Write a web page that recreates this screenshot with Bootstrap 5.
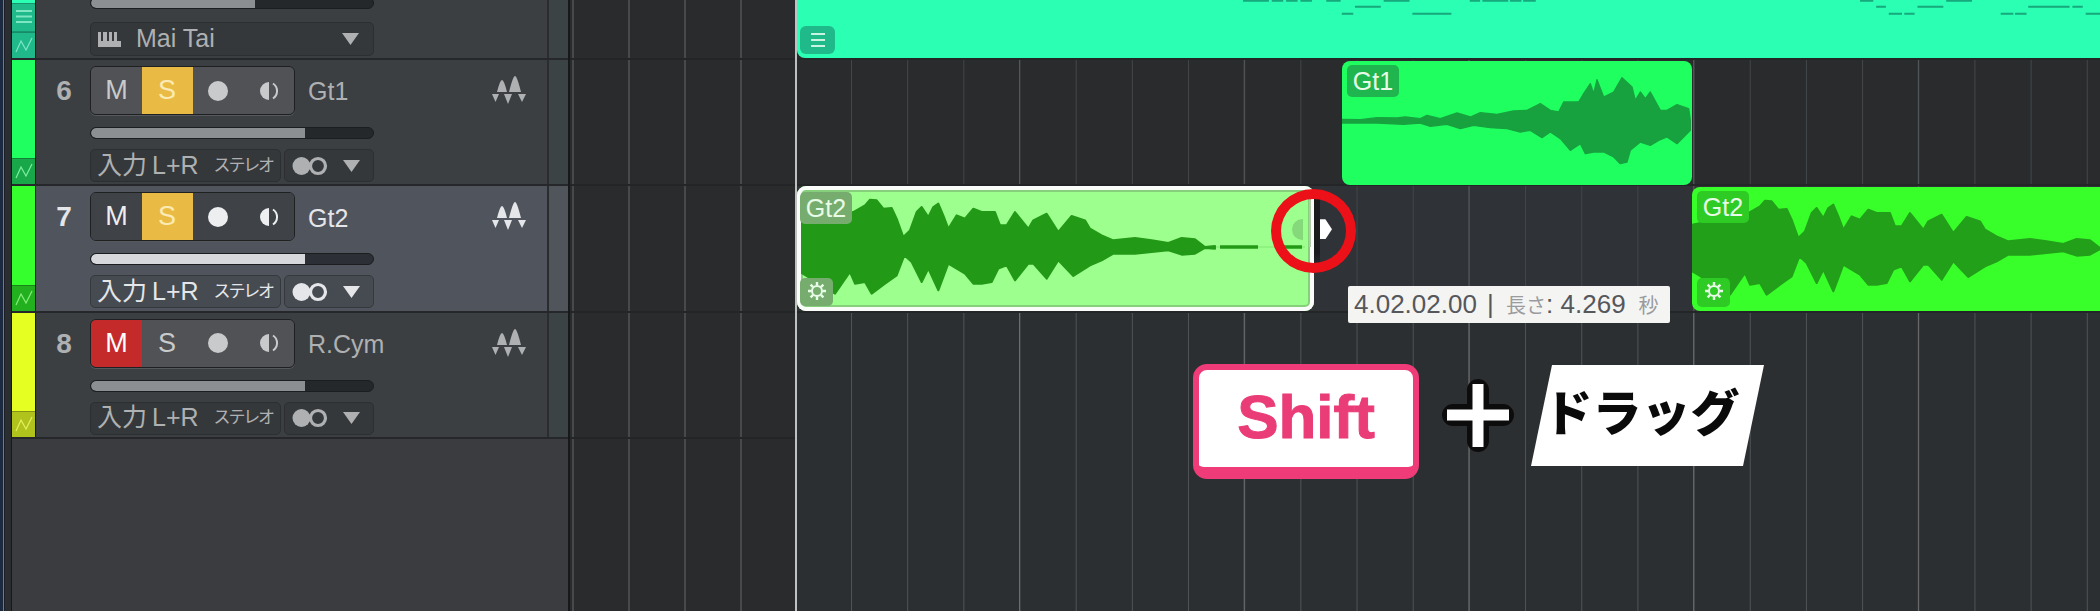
<!DOCTYPE html>
<html lang="ja">
<head>
  <meta charset="UTF-8">
  <title>Gt2 Shift + ドラッグ</title>
  <link href="https://cdn.jsdelivr.net/npm/bootstrap@5.3.0/dist/css/bootstrap.min.css" rel="stylesheet">
  <style>
    html, body { margin: 0; height: 611px; overflow: hidden; background: #2c2f31; }
    body { font-family: "Liberation Sans", "Noto Sans CJK JP", sans-serif; }
    .daw { position: relative; width: 2100px; height: 611px; overflow: hidden; }

    /* track panel */
    .edge-strip { width: 11px; background: linear-gradient(to right, #1b2a40 0 3px, #5d7fae 3px 4px, #1c2026 4px 5px, #2b2e31 5px); }
    .track-col { width: 559px; background: #3a3c3f; border-left: 1px solid #17181a; border-right: 2px solid #17181a; }
    .trk-row { height: 126.33px; background: #3c3f42; border-bottom: 2px solid #25272a; color: #aeb0b2; }
    .trk-row.first-row { height: 60px; }
    .trk-row.is-sel { background: #50545c; color: #e4e6e9; }
    .stripe { width: 24px; border-right: 1px solid #17181a; }
    .stripe-main { flex: 1; }
    .stripe-sub { height: 26px; border-top: 1px solid rgba(0,0,0,.25); }
    .stripe-sub svg, .stripe-mid svg { display: block; margin: 4px auto 0; }
    .stripe-mid { height: 29px; border-top: 1px solid rgba(0,0,0,.2); border-bottom: 1px solid rgba(0,0,0,.2); background: #1fb98a; }
    .c-teal .stripe-main { background: #2bffb3; } .c-teal .stripe-sub { background: #1fb98a; }
    .c-green .stripe-main { background: #1fff60; } .c-green .stripe-sub { background: #18a84a; }
    .c-lime .stripe-main { background: #35ff2d; } .c-lime .stripe-sub { background: #22b01f; }
    .c-yellow .stripe-main { background: #e6ff22; } .c-yellow .stripe-sub { background: #b0c21c; }
    .trk-num { width: 54px; font-size: 28px; font-weight: 700; line-height: 49px; text-align: center; padding: 6px 0 0 2px; }
    .trk-body { width: 285px; flex-shrink: 0; padding-top: 6px; }
    .first-row .trk-body { padding-top: 0; }
    .trk-top { height: 49px; }
    .trk-btns { width: 205px; height: 49px; flex-shrink: 0; border: 1px solid #1e2022; border-radius: 6px; overflow: hidden; box-shadow: 0 1px 0 #55585c; }
    .trk-btns .btn { flex: 1 1 0; height: 100%; padding: 0; border: 0; border-right: 1px solid #25272a; border-radius: 0; background: #505255; color: #c8cacc; font-size: 27px; line-height: 47px; display: flex; align-items: center; justify-content: center; }
    .trk-btns .btn:last-child { border-right: 0; }
    .is-sel .trk-btns .btn { background: #3f4247; color: #eceef0; border-right-color: #36383c; }
    .trk-btns .btn.on-solo { background: #e9bb45; color: #fbeab4; }
    .trk-btns .btn.on-mute { background: #c42a2a; color: #fff; }
    .rec-dot { width: 20px; height: 20px; border-radius: 50%; background: currentColor; }
    .trk-name { font-size: 25px; margin-left: 13px; padding-top: 3px; white-space: nowrap; }
    .trk-meter { margin-left: 117px; margin-top: 16px; flex-shrink: 0; }
    .trk-slider.progress { height: 12px; width: 284px; margin-top: 12px; background: #25282b; border: 1px solid #1b1d1f; border-radius: 6px; }
    .first-row .trk-slider.progress { margin-top: -3px; }
    .trk-slider .progress-bar { background: #8c8f92; border-radius: 6px 0 0 6px; }
    .is-sel .trk-slider .progress-bar { background: #d6d8dc; }
    .is-sel .trk-slider.progress { background: #2c3036; }
    .input-line { margin-top: 10px; width: 284px; height: 33px; gap: 3px; }
    .in-box { height: 33px; background: #35383b; border: 1px solid #2c2e31; border-radius: 5px; }
    .is-sel .in-box { background: #464a51; border-color: #35383d; }
    .in-name { width: 191px; font-size: 25px; padding-left: 6px; white-space: nowrap; }
    .in-name b { font-weight: 400; margin-left: 5px; }
    .in-kind { font-size: 17px; letter-spacing: -2.2px; margin-left: 15px; }
    .in-mode { flex: 1; padding-left: 7px; gap: 15px; }
    .inst-box { width: 284px; height: 34px; margin-top: 13px; font-size: 25px; padding: 0 14px 0 7px; }
    .inst-box span { margin-left: 15px; }
    .inst-box svg:last-child { margin-left: auto; }
    .trk-side { width: 21px; margin-left: 21px; background: #3b4344; border-left: 2px solid #2a2c2e; }
    .first-row .trk-side { margin-left: auto; }
    .is-sel .trk-side { background: #50555c; }
    .trk-filler { flex: 1; background: #3a3c3f; }

    /* timeline */
    .gutter { width: 225px; background-color: #2a2b2d;
      background-image: linear-gradient(to right, #47494b 2px, transparent 2px);
      background-size: 56px 100%; background-position: 58px 0; }
    .arrange { flex: 1; border-left: 2px solid #bfc0c2; background-color: #2c2f31; box-shadow: inset 2px 0 0 #141517; }
    .lane { position: relative; height: 126.33px; border-bottom: 2px solid #232527;
      background-image: linear-gradient(to right, #55585a 1px, transparent 1px), linear-gradient(to right, #434648 1px, transparent 1px);
      background-size: 224.72px 100%, 56.18px 100%;
      background-position: 222px 0, 54px 0; background-color: #292b2d; }
    .gutter .lane { background: none; }
    .lane.first-lane { height: 60px; }
    .lane.sel-lane { background-color: #2f3236; }
    .lane.last-lane { flex: 1; border-bottom: 0; background-color: #2c2f31;
      background-image: linear-gradient(to right, #6a6c6e 1px, transparent 1px), linear-gradient(to right, #505355 1px, transparent 1px); }

    /* clips */
    .clip { position: absolute; overflow: hidden; }
    .clip svg.wave { position: absolute; left: 0; top: 0; }
    .clip-tag { position: absolute; border-radius: 5px; color: #e8fbe6; font-size: 25px; line-height: 32px; text-align: center; }
    .tag-name { left: 5px; top: 4px; width: 52px; height: 32px; }
    .tag-gear { left: 5px; top: 91px; width: 33px; height: 29px; padding-top: 3px; line-height: 0; }
    .clip-top { left: 0; right: 0; top: 0; bottom: 0; background: #2bffb3; border-bottom-left-radius: 8px; }
    .clip-top .tag-menu { position: absolute; left: 3px; top: 26px; width: 35px; height: 28px; background: #1fb98a; border-radius: 6px; padding-top: 6px; text-align: center; line-height: 0; }
    .top-notes { position: absolute; left: 403px; top: 0; }
    .clip-gt1 { left: 545px; top: 1px; width: 350px; height: 124px; background: #1fff5f; border-radius: 8px; }
    .clip-gt1 .tag-name { background: #1fb650; }
    .clip-gt2-a { left: 0; top: 0; width: 517px; height: 125px; background: #9dff8e; border-radius: 9px; box-shadow: inset 0 0 0 4px #fafcfa, inset 0 0 0 6px #86cf7b; }
    .clip-gt2-a .tag-name { left: 3px; top: 6px; background: #76ad6f; }
    .clip-gt2-a .tag-gear { left: 3px; top: 92px; width: 33px; height: 28px; background: #76ad6f; }
    .clip-gt2-a svg.wave { clip-path: inset(4px 4px 4px 4px round 6px); }
    .clip-gt2-b { left: 895px; right: 0; top: 1px; height: 124px; background: #38ff2a; border-radius: 8px 0 0 8px; }
    .clip-gt2-b .tag-name, .clip-gt2-b .tag-gear { background: #2fcb25; }
    .fade-knob { position: absolute; left: 495px; top: 33px; width: 11px; height: 21px; background: #85d97a; border-radius: 11px 0 0 11px; }
    .trim-line { position: absolute; left: 512px; top: 13px; width: 2px; height: 48px; background: #b6c8b0; }
    .trim-edge { position: absolute; left: 517px; top: 10px; width: 6px; height: 76px; background: linear-gradient(#191a1c 75%, transparent); }
    .trim-arrow { position: absolute; left: 523px; top: 33px; width: 12px; height: 20px; background: #fff; clip-path: polygon(0 0, 45% 0, 100% 50%, 45% 100%, 0 100%); }

    /* annotations over the picture */
    .ring-mark { position: absolute; left: 1271px; top: 189px; width: 85px; height: 84px; border: 10px solid #ec1118; border-radius: 50%; }
    .len-tip { position: absolute; left: 1348px; top: 286px; width: 322px; height: 37px; background: #f4f4f3; border-radius: 2px; color: #55575b; font-size: 26px; line-height: 36px; padding-left: 6px; white-space: nowrap; }
    .len-tip i { font-style: normal; color: #9a9b9e; font-size: 20px; }
    .len-tip .t-sep { margin: 0 5px 0 3px; }
    .len-tip .t-unit { margin-left: 13px; }
    .key-shift { position: absolute; left: 1193px; top: 364px; width: 226px; height: 115px; background: #fff; border: solid #ef3b78; border-width: 6px 6px 12px; border-radius: 14px; color: #ea3c77; font-size: 62px; font-weight: 700; -webkit-text-stroke: 1px #ea3c77; padding-bottom: 4px; }
    .plus-mark { position: absolute; left: 1442px; top: 379px; }
    .drag-tag { position: absolute; left: 1531px; top: 365px; width: 233px; height: 101px; background: #fff; clip-path: polygon(21px 0, 100% 0, 212px 100%, 0 100%); color: #0a0a0a; font-size: 49px; font-weight: 900; padding: 0 12px 2px 0; white-space: nowrap; }
  </style>
</head>
<body>

<svg width="0" height="0" class="position-absolute">
  <defs>
    <symbol id="i-mon" viewBox="0 0 20 20"><path d="M10 1A9 9 0 0 0 10 19Z" fill="currentColor"/><path d="M14 2.500A9 9 0 0 1 14 17.500" fill="none" stroke="currentColor" stroke-width="2"/></symbol>
    <symbol id="i-meter" viewBox="0 0 34 28"><path fill="currentColor" d="M5 16Q8 4 10 4T15 16ZM17 16Q21 0 23 0T29 16ZM0 18H7L3.500 26ZM12 18H20L16 28ZM26 18H34L30 26Z"/></symbol>
    <symbol id="i-stereo" viewBox="0 0 36 20"><circle cx="9.500" cy="10" r="9" fill="currentColor"/><circle cx="26" cy="10" r="7.500" fill="none" stroke="currentColor" stroke-width="3.200"/></symbol>
    <symbol id="i-tri" viewBox="0 0 17 12"><path d="M0 0H17L8.500 12Z" fill="currentColor"/></symbol>
    <symbol id="i-zig" viewBox="0 0 18 16"><path d="M1 15L6 4L11 13L17 1" fill="none" stroke="currentColor" stroke-width="1.200"/></symbol>
    <symbol id="i-gear" viewBox="0 0 20 20"><g fill="none" stroke="currentColor"><circle cx="10" cy="10" r="5" stroke-width="2"/><path stroke-width="2.400" d="M10 1V4.500M10 15.500V19M1 10H4.500M15.500 10H19M3.600 3.600L6.100 6.100M13.900 13.900L16.400 16.400M3.600 16.400L6.100 13.900M13.900 6.100L16.400 3.600"/></g></symbol>
    <symbol id="wave-gt2" viewBox="36 562 1551 375">
      <path fill="currentColor" stroke="currentColor" stroke-width="6" stroke-linejoin="round" d="M36 675L205 640L240 620L255 603L275 605L295 630L320 628L335 660L355 715L375 695L395 640L410 625L430 655L445 625L460 615L475 650L490 690L515 650L540 660L565 630L590 640L610 640L630 640L645 680L665 680L690 640L710 665L730 690L745 665L785 645L820 700L860 652L900 665L915 690L950 710L985 725L1050 718L1100 725L1150 733L1190 718L1230 722L1260 745L1290 742L1290 750L1260 748L1230 765L1190 768L1150 755L1100 760L1050 765L985 765L950 785L915 800L865 832L820 785L785 840L745 795L730 795L690 845L665 800L640 810L620 850L590 855L565 855L540 825L515 810L490 795L460 875L430 810L410 850L380 790L358 770L335 830L300 855L260 885L240 850L210 855L195 820L150 885L45 820L36 815Z"/>
      <path d="M1305 745H1419M1488 745H1551" fill="none" stroke="currentColor" stroke-width="10"/>
      <path d="M1290 745H1560" fill="none" stroke="currentColor" stroke-width="2" opacity=".35"/>
    </symbol>
    <symbol id="wave-gt1" viewBox="35 32 1050 375">
      <path fill="currentColor" stroke="currentColor" stroke-width="4" stroke-linejoin="round" d="M35 207L90 208L140 202L200 203L225 200L270 205L290 195L330 205L380 188L420 200L450 187L500 192L550 182L590 180L630 160L660 180L685 185L700 155L745 155L760 130L780 100L790 130L800 88L820 140L850 125L875 82L905 110L915 150L930 125L945 145L960 125L990 180L1010 180L1040 163L1075 175L1080 210L1080 240L1060 260L1040 280L1010 260L985 270L960 285L930 275L900 300L890 335L870 340L850 320L820 305L790 305L765 310L750 280L720 300L690 265L660 245L635 262L600 240L570 245L530 235L480 232L430 225L390 235L350 222L300 228L270 218L220 222L140 218L90 218L35 218Z"/>
    </symbol>
  </defs>
</svg>

<div class="daw d-flex">
  <div class="edge-strip"></div>

  <div class="track-col d-flex flex-column">
    <!-- 5, only its bottom shows -->
    <div class="trk-row first-row d-flex c-teal">
      <div class="stripe d-flex flex-column">
        <div class="stripe-main"></div>
        <div class="stripe-mid text-center"><svg width="20" height="18" viewBox="0 0 20 18"><path d="M2 3H18M2 8.500H18M2 14H18" stroke="#7fe6c4" stroke-width="2"/></svg></div>
        <div class="stripe-sub" style="color:#7fe6c4"><svg width="18" height="16"><use href="#i-zig"/></svg></div>
      </div>
      <div class="trk-num"></div>
      <div class="trk-body">
        <div class="progress trk-slider"><div class="progress-bar" style="width:58%"></div></div>
        <div class="in-box inst-box d-flex align-items-center">
          <svg width="23" height="15" viewBox="0 0 23 15"><path fill="#aeb0b2" d="M0 0H3V9H5V0H9V9H11V0H14V9H16V0H19V9H23V0V15H0Z"/></svg>
          <span>Mai Tai</span>
          <svg width="17" height="12"><use href="#i-tri"/></svg>
        </div>
      </div>
      <div class="trk-side"></div>
    </div>

    <div class="trk-row d-flex c-green">
      <div class="stripe d-flex flex-column">
        <div class="stripe-main"></div>
        <div class="stripe-sub" style="color:#7ef0a0"><svg width="18" height="16"><use href="#i-zig"/></svg></div>
      </div>
      <div class="trk-num">6</div>
      <div class="trk-body">
        <div class="trk-top d-flex align-items-center">
          <div class="btn-group trk-btns">
            <button class="btn">M</button><button class="btn on-solo">S</button>
            <button class="btn"><span class="rec-dot"></span></button>
            <button class="btn"><svg width="20" height="20"><use href="#i-mon"/></svg></button>
          </div>
          <div class="trk-name">Gt1</div>
        </div>
        <div class="progress trk-slider"><div class="progress-bar" style="width:76%"></div></div>
        <div class="input-line d-flex">
          <div class="in-box in-name d-flex align-items-center">入力<b>L+R</b><span class="in-kind">ステレオ</span></div>
          <div class="in-box in-mode d-flex align-items-center"><svg width="36" height="20"><use href="#i-stereo"/></svg><svg width="17" height="12"><use href="#i-tri"/></svg></div>
        </div>
      </div>
      <svg class="trk-meter" width="34" height="28"><use href="#i-meter"/></svg>
      <div class="trk-side"></div>
    </div>

    <div class="trk-row is-sel d-flex c-lime">
      <div class="stripe d-flex flex-column">
        <div class="stripe-main"></div>
        <div class="stripe-sub" style="color:#86ee7c"><svg width="18" height="16"><use href="#i-zig"/></svg></div>
      </div>
      <div class="trk-num">7</div>
      <div class="trk-body">
        <div class="trk-top d-flex align-items-center">
          <div class="btn-group trk-btns">
            <button class="btn">M</button><button class="btn on-solo">S</button>
            <button class="btn"><span class="rec-dot"></span></button>
            <button class="btn"><svg width="20" height="20"><use href="#i-mon"/></svg></button>
          </div>
          <div class="trk-name">Gt2</div>
        </div>
        <div class="progress trk-slider"><div class="progress-bar" style="width:76%"></div></div>
        <div class="input-line d-flex">
          <div class="in-box in-name d-flex align-items-center">入力<b>L+R</b><span class="in-kind">ステレオ</span></div>
          <div class="in-box in-mode d-flex align-items-center"><svg width="36" height="20"><use href="#i-stereo"/></svg><svg width="17" height="12"><use href="#i-tri"/></svg></div>
        </div>
      </div>
      <svg class="trk-meter" width="34" height="28"><use href="#i-meter"/></svg>
      <div class="trk-side"></div>
    </div>

    <div class="trk-row d-flex c-yellow">
      <div class="stripe d-flex flex-column">
        <div class="stripe-main"></div>
        <div class="stripe-sub" style="color:#e6f060"><svg width="18" height="16"><use href="#i-zig"/></svg></div>
      </div>
      <div class="trk-num">8</div>
      <div class="trk-body">
        <div class="trk-top d-flex align-items-center">
          <div class="btn-group trk-btns">
            <button class="btn on-mute">M</button><button class="btn">S</button>
            <button class="btn"><span class="rec-dot"></span></button>
            <button class="btn"><svg width="20" height="20"><use href="#i-mon"/></svg></button>
          </div>
          <div class="trk-name">R.Cym</div>
        </div>
        <div class="progress trk-slider"><div class="progress-bar" style="width:76%"></div></div>
        <div class="input-line d-flex">
          <div class="in-box in-name d-flex align-items-center">入力<b>L+R</b><span class="in-kind">ステレオ</span></div>
          <div class="in-box in-mode d-flex align-items-center"><svg width="36" height="20"><use href="#i-stereo"/></svg><svg width="17" height="12"><use href="#i-tri"/></svg></div>
        </div>
      </div>
      <svg class="trk-meter" width="34" height="28"><use href="#i-meter"/></svg>
      <div class="trk-side"></div>
    </div>

    <div class="trk-filler"></div>
  </div>

  <div class="gutter d-flex flex-column">
    <div class="lane first-lane"></div>
    <div class="lane"></div>
    <div class="lane"></div>
    <div class="lane"></div>
  </div>

  <div class="arrange d-flex flex-column">
    <div class="lane first-lane">
      <div class="clip clip-top">
        <svg class="top-notes" width="900" height="40" viewBox="0 0 1568 120" preserveAspectRatio="none">
          <path fill="none" stroke="#17a87b" stroke-width="6" d="M75 2H120M125 2H145M150 2H170M175 2H195M220 2H245M320 2H365M470 2H488M492 2H537M540 2H560M563 2H585M1150 2H1173M1300 2H1345M270 20H315M1178 20H1195M1250 20H1295M1443 20H1515M1520 20H1538M247 41H267M370 41H438M1200 41H1223M1227 41H1245M1395 41H1417M1420 41H1440M1543 41H1568"/>
        </svg>
        <div class="tag-menu"><svg width="20" height="16" viewBox="0 0 20 16"><path d="M3 2H17M3 8H17M3 14H17" stroke="#c7f5e2" stroke-width="2"/></svg></div>
      </div>
    </div>
    <div class="lane">
      <div class="clip clip-gt1">
        <svg class="wave" width="350" height="125" style="color:#17a23f"><use href="#wave-gt1"/></svg>
        <div class="clip-tag tag-name">Gt1</div>
      </div>
    </div>
    <div class="lane sel-lane">
      <div class="clip clip-gt2-a">
        <svg class="wave" width="517" height="125" style="color:#239a17"><use href="#wave-gt2"/></svg>
        <div class="clip-tag tag-name">Gt2</div>
        <div class="clip-tag tag-gear"><svg width="20" height="20"><use href="#i-gear"/></svg></div>
        <div class="fade-knob"></div>
        <div class="trim-line"></div>
      </div>
      <div class="trim-edge"></div>
      <div class="trim-arrow"></div>
      <div class="clip clip-gt2-b">
        <svg class="wave" width="517" height="125" style="color:#23a01a"><use href="#wave-gt2"/></svg>
        <div class="clip-tag tag-name">Gt2</div>
        <div class="clip-tag tag-gear"><svg width="20" height="20"><use href="#i-gear"/></svg></div>
      </div>
    </div>
    <div class="lane last-lane"></div>
  </div>

  <div class="ring-mark"></div>
  <div class="len-tip">4.02.02.00<span class="t-sep"> | </span><i>長さ</i>: 4.269<i class="t-unit">秒</i></div>
  <div class="key-shift d-flex align-items-center justify-content-center">Shift</div>
  <svg class="plus-mark" width="72" height="73" viewBox="0 0 72 73">
    <path d="M11 36H61M36 11V62" stroke="#0c0c0c" stroke-width="22" stroke-linecap="round"/>
    <path d="M5 36H67M36 5V68" stroke="#fff" stroke-width="11"/>
  </svg>
  <div class="drag-tag d-flex align-items-center justify-content-center"><span>ドラッグ</span></div>
</div>

<script src="https://cdn.jsdelivr.net/npm/bootstrap@5.3.0/dist/js/bootstrap.bundle.min.js"></script>
</body>
</html>
